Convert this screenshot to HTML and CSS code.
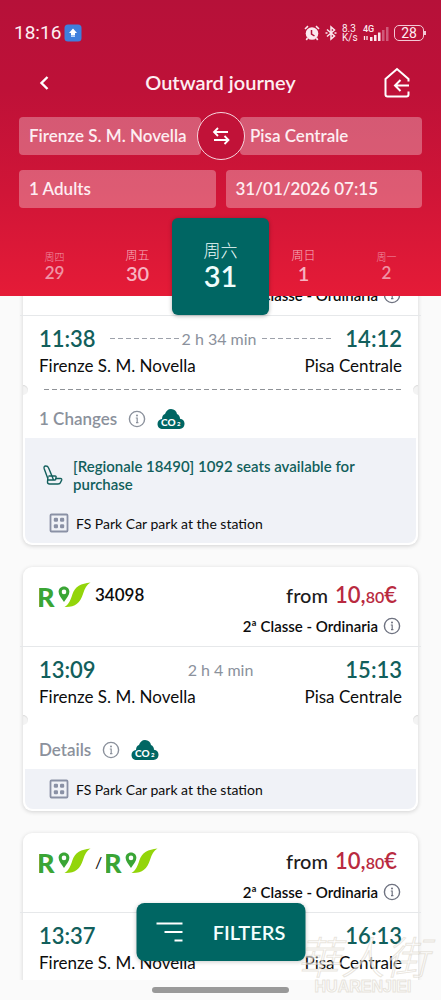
FILE: index.html
```html
<!DOCTYPE html>
<html lang="en">
<head>
<meta charset="utf-8">
<meta name="viewport" content="width=device-width, initial-scale=1">
<title>Outward journey</title>
<link rel="stylesheet" href="styles.css">
</head>
<body>
<svg class="defs" aria-hidden="true">
  <symbol id="info" viewBox="0 0 18 18">
    <circle cx="9" cy="9" r="7.6" fill="none" stroke="currentColor" stroke-width="1.4"/>
    <circle cx="9" cy="5.6" r="1" fill="currentColor"/>
    <path d="M7.800 8H9.200V12.900M8 12.600H10.400" fill="none" stroke="currentColor" stroke-width="1.200"/>
  </symbol>
  <symbol id="co2" viewBox="0 0 28 22">
    <path d="M6 21C2.600 21 .5 19 .5 16C.5 13 2.500 11.200 5 11C5 8 6.500 6.500 8 6C9 3 11 1 14 1C17.500 1 19.500 3.200 20 6C22 7 23 8.600 23 10.800C25.800 11 27.500 13 27.500 15.600C27.500 19 25.500 21 22.500 21Z" fill="#006663"/>
    <text x="4" y="18" class="co2-text">CO</text><text x="20" y="18" class="co2-sub">2</text>
  </symbol>
  <symbol id="park" viewBox="0 0 20 20">
    <rect x="1.500" y="1.500" width="17" height="17" rx="1" fill="none" stroke="currentColor" stroke-width="1.800"/>
    <g fill="currentColor"><rect x="4.800" y="4.800" width="4.200" height="4" rx="1.200"/><rect x="11" y="4.800" width="4.200" height="4" rx="1.200"/><rect x="4.800" y="11.200" width="4.200" height="4" rx="1.200"/><rect x="11" y="11.200" width="4.200" height="4" rx="1.200"/></g>
  </symbol>
  <symbol id="rv" viewBox="0 0 52 26">
    <text x="-2" y="25" class="rv-text">R</text>
    <path fill="#3aa535" fill-rule="evenodd" d="M25 4.500C28.200 4.500 30.400 6.800 30.400 9.800C30.400 13 27.500 16.500 25 20C22.500 16.500 19.600 13 19.600 9.800C19.600 6.800 21.800 4.500 25 4.500ZM25 7.600A2.300 2.300 0 1 0 25 12.200A2.300 2.300 0 1 0 25 7.600Z"/>
    <path fill="#93d50a" d="M25.500 25C30 22.500 31.500 18 33.500 12C36 4.500 42 1.500 51.500 .5C47.500 3 46 6 44 12C41 21 36 25.500 25.500 25Z"/>
  </symbol>
</svg>

<header class="top">
  <div class="status">
    <span class="clock">18:16</span>
    <svg class="badge" viewBox="0 0 18 18" aria-hidden="true"><rect x=".5" y=".5" width="17" height="17" rx="3.500" fill="#3f7fdc"/><path d="M9 4.500L13 9H11V11.500H7V9H5Z" fill="#fff"/><rect x="7" y="12" width="4" height="1" fill="#b9d6ff"/></svg>
    <div class="indicators">
      <svg class="alarm" viewBox="0 0 16 16" aria-hidden="true"><circle cx="8" cy="8.500" r="6.300" fill="#fbe9ef"/><path d="M1 4L4 1.200M15 4L12 1.200M3.500 13L2.300 15M12.500 13L13.700 15" stroke="#fbe9ef" stroke-width="1.600"/><path d="M7.500 5V9L10.500 11" fill="none" stroke="#b01139" stroke-width="1.500"/></svg>
      <svg class="bt" viewBox="0 0 12 16" aria-hidden="true"><path d="M2 4.500L9.500 11L6 14V2L9.500 5L2 11.500M.5 8H2.500M9.500 8H11.500" fill="none" stroke="#fbe9ef" stroke-width="1.500"/></svg>
      <span class="rate">8.3<br>K/s</span>
      <svg class="signal" viewBox="0 0 28 18" aria-hidden="true"><text x="1" y="8" class="sig-text">4G</text><path d="M2.500 12V16M5 12V16" stroke="#fbe9ef" stroke-width="1.300"/><g fill="#fbe9ef"><rect x="8" y="13" width="2.500" height="4"/><rect x="12" y="11" width="2.500" height="6"/><rect x="16" y="8.500" width="2.500" height="8.500"/></g><g fill="#cf5a7a"><rect x="20" y="6" width="2.500" height="11"/><rect x="24" y="3" width="2.500" height="14"/></g></svg>
      <span class="battery">28</span>
    </div>
  </div>

  <div class="titlebar">
    <button class="icon-btn" aria-label="Back"><svg class="back" viewBox="0 0 10 16"><path d="M8.500 2L2.500 8L8.500 14" fill="none" stroke="#fff" stroke-width="2.400"/></svg></button>
    <h1>Outward journey</h1>
    <button class="icon-btn" aria-label="Home"><svg class="home" viewBox="0 0 28 32"><path d="M25.500 14.500V12L14 2L2.500 12V27.500Q2.500 29.500 4.500 29.500H23.500Q25.500 29.500 25.500 27.500V24.500M26 18.500H12.500M17.500 13L12 18.500L17.500 24" fill="none" stroke="#fff" stroke-width="2"/></svg></button>
  </div>

  <div class="search">
    <div class="route">
      <button class="field">Firenze S. M. Novella</button>
      <button class="field field-to">Pisa Centrale</button>
      <button class="swap" aria-label="Swap stations"><svg viewBox="0 0 18 20"><path d="M16 6H2M6 2L2 6L6 10M2 14H16.500M12.500 10L16.500 14L12.500 18" fill="none" stroke="#fff" stroke-width="1.800"/></svg></button>
    </div>
    <div class="options">
      <button class="field">1 Adults</button>
      <button class="field">31/01/2026 07:15</button>
    </div>
  </div>

  <nav class="dates" aria-label="Date">
    <button class="day far"><span>周四</span><b>29</b></button>
    <button class="day"><span>周五</span><b>30</b></button>
    <button class="day selected" aria-current="date"><span>周六</span><b>31</b></button>
    <button class="day"><span>周日</span><b>1</b></button>
    <button class="day far"><span>周一</span><b>2</b></button>
  </nav>
</header>

<main class="results">
  <article class="card">
    <div class="card-head">
      <div class="trains"><svg class="rv"><use href="#rv"/></svg></div>
      <div class="fare">
        <p class="price">from <strong>10,<small>80</small>€</strong></p>
        <p class="class">2ª Classe - Ordinaria <svg class="info"><use href="#info"/></svg></p>
      </div>
    </div>
    <div class="journey">
      <div class="times"><time>11:38</time><span class="duration dashed">2 h 34 min</span><time>14:12</time></div>
      <div class="stations"><span>Firenze S. M. Novella</span><span>Pisa Centrale</span></div>
    </div>
    <div class="tear line"></div>
    <div class="details"><a href="#">1 Changes</a><svg class="info"><use href="#info"/></svg><svg class="co2"><use href="#co2"/></svg></div>
    <div class="notes">
      <p class="seats"><svg class="seat" viewBox="0 0 20 20"><path d="M5 14L1.300 4Q.3 1 2.800 1Q4.800 1 5.500 2.800L9 11H12Q13.500 11 13 12.500L12.500 15M5 11.500L4.500 17Q4.500 19 6.500 19H15Q17 19 17.500 17.500L18.700 15Q19 13.500 17.500 13.500H13M4.500 15H12.500M5.500 11H9L10.500 15" fill="none" stroke="currentColor" stroke-width="1.400"/></svg><span>[Regionale 18490] 1092 seats available for purchase</span></p>
      <p class="park"><svg class="park-icon"><use href="#park"/></svg>FS Park Car park at the station</p>
    </div>
  </article>

  <article class="card">
    <div class="card-head">
      <div class="trains"><svg class="rv"><use href="#rv"/></svg><span class="number">34098</span></div>
      <div class="fare">
        <p class="price">from <strong>10,<small>80</small>€</strong></p>
        <p class="class">2ª Classe - Ordinaria <svg class="info"><use href="#info"/></svg></p>
      </div>
    </div>
    <div class="journey">
      <div class="times"><time>13:09</time><span class="duration">2 h 4 min</span><time>15:13</time></div>
      <div class="stations"><span>Firenze S. M. Novella</span><span>Pisa Centrale</span></div>
    </div>
    <div class="tear"></div>
    <div class="details"><a href="#">Details</a><svg class="info"><use href="#info"/></svg><svg class="co2"><use href="#co2"/></svg></div>
    <div class="notes">
      <p class="park"><svg class="park-icon"><use href="#park"/></svg>FS Park Car park at the station</p>
    </div>
  </article>

  <article class="card">
    <div class="card-head">
      <div class="trains joined"><svg class="rv"><use href="#rv"/></svg><span>/</span><svg class="rv"><use href="#rv"/></svg></div>
      <div class="fare">
        <p class="price">from <strong>10,<small>80</small>€</strong></p>
        <p class="class">2ª Classe - Ordinaria <svg class="info"><use href="#info"/></svg></p>
      </div>
    </div>
    <div class="journey">
      <div class="times"><time>13:37</time><time>16:13</time></div>
      <div class="stations"><span>Firenze S. M. Novella</span><span>Pisa Centrale</span></div>
    </div>
  </article>
</main>

<button class="filters"><svg viewBox="0 0 28 20" aria-hidden="true"><path d="M1 1.500H27M9 10H27M19 18.500H27" stroke="#fff" stroke-width="2"/></svg>FILTERS</button>

<div class="watermark"><span class="mark-cjk">華人街</span><span class="mark-latin">HUARENJIEI</span></div>

<footer class="gesture"><span></span></footer>
</body>
</html>
```

FILE: styles.css
```css
* { box-sizing: border-box; }

body {
  margin: 0;
  height: 100vh;
  display: flex;
  flex-direction: column;
  overflow: hidden;
  background: #fafafa;
  color: #0c0c0c;
  font-family: Lato, "Noto Sans CJK SC", sans-serif;
  font-size: 16px;
}

p, h1 { margin: 0; }
button { border: 0; padding: 0; background: none; color: inherit; font: inherit; cursor: pointer; }
.defs { display: none; }

/* Header */
.top {
  position: relative;
  z-index: 2;
  flex: none;
  background: linear-gradient(#b61139, #be1138 30%, #d01537 65%, #e51b37);
  color: #fdeef2;
}

.status { height: 64px; padding: 1px 17px 0 14px; display: flex; align-items: center; }
.clock { font-family: Roboto, sans-serif; font-size: 19px; font-weight: 400; line-height: 20px; }
.badge { width: 18px; height: 18px; margin-left: 3px; }
.indicators { margin-left: auto; display: flex; align-items: center; }
.alarm { width: 16px; height: 16px; margin-right: 5px; }
.bt { width: 12px; height: 16px; margin-right: 5px; }
.rate { width: 20px; font-family: Roboto, sans-serif; font-size: 10px; line-height: 9px; }
.signal { width: 28px; height: 18px; margin-right: 4px; }
.sig-text { font: 500 9px Roboto, sans-serif; fill: #fbe9ef; }
.battery {
  position: relative;
  width: 30px;
  height: 16px;
  border: 1px solid #f3c9d5;
  border-radius: 5px;
  font-family: Roboto, sans-serif;
  font-size: 14px;
  line-height: 14px;
  text-align: center;
}
.battery::after { content: ""; position: absolute; right: -3px; top: 5px; width: 2px; height: 4px; background: #f3c9d5; }

.titlebar { height: 37px; padding: 0 30px; display: flex; align-items: center; justify-content: space-between; }
.titlebar h1 { padding-bottom: 2px; font-size: 20px; font-weight: 600; line-height: 24px; }
.icon-btn { width: 28px; height: 32px; display: flex; align-items: center; justify-content: center; }
.back { width: 10px; height: 16px; }
.home { width: 28px; height: 32px; }

.search { padding: 16px 19px 10px; }
.route, .options { display: grid; grid-template-columns: 1fr 1fr; }
.route { position: relative; gap: 39px; }
.options { gap: 10px; margin-top: 15px; }
.field {
  height: 38px;
  padding: 0 10px 2px;
  border-radius: 4px;
  background: rgba(255, 255, 255, 0.3);
  font-size: 17px;
  font-weight: 600;
  text-align: left;
  white-space: nowrap;
}
.swap {
  position: absolute;
  inset: 0;
  margin: -5px auto;
  width: 48px;
  height: 48px;
  display: flex;
  align-items: center;
  justify-content: center;
  border: 1px solid #f6d5dd;
  border-radius: 50%;
  background: #c11238;
}
.swap svg { width: 18px; height: 20px; }

.dates { height: 78px; padding: 0 13px; display: grid; grid-template-columns: repeat(5, 1fr); align-items: start; }
.day { padding-top: 29px; display: flex; flex-direction: column; align-items: center; font-size: 12px; line-height: 16px; color: #f7b3c1; }
.day span { font-family: "Noto Sans CJK SC", sans-serif; font-weight: 300; }
.day b { font-size: 20px; font-weight: 600; line-height: 20px; }
.day.far { padding-top: 31px; font-size: 10px; color: #f093a5; }
.day.far b { font-size: 17px; line-height: 16px; }
.day.selected {
  height: 97px;
  margin: 0 -7px;
  padding-top: 22px;
  border-radius: 6px;
  background: #006663;
  box-shadow: 0 1px 4px rgba(0, 0, 0, 0.3);
  color: #effdfc;
  font-size: 17px;
  line-height: 20px;
}
.day.selected b { font-size: 29px; line-height: 32px; }

/* Results, scrolled partly under the header */
.results { flex: 1; min-height: 0; margin-top: -60px; padding: 0 23px; overflow: hidden; }

.card { margin-bottom: 22px; padding: 0 2px 2px; border-radius: 9px; background: #fff; box-shadow: 0 1px 4px rgba(0, 0, 0, 0.16); }
.card-head {
  height: 80px;
  margin: 0 -5px;
  padding: 13px 20px 0 19px;
  display: flex;
  justify-content: space-between;
  border-bottom: 1px solid #e6e8ea;
}
.trains { height: 30px; display: flex; align-items: center; gap: 4px; }
.rv { width: 52px; height: 26px; }
.rv-text { font: 900 27px Lato, sans-serif; fill: #3aa535; }
.number { padding-bottom: 2px; font-weight: 600; font-size: 17px; }
.fare { text-align: right; }
.price { height: 31px; padding-right: 4px; font-size: 20px; line-height: 30px; font-weight: 500; color: #1c1c1c; }
.price strong { margin-left: 2px; font-size: 22px; font-weight: 600; color: #b92a40; }
.price small { font-size: 16px; }
.class { height: 30px; display: flex; align-items: center; justify-content: flex-end; gap: 5px; font-size: 15px; font-weight: 600; }
.info { width: 18px; height: 18px; color: #6e7280; }

.journey { height: 73px; padding: 7px 14px 0; }
.times, .stations { display: flex; align-items: center; justify-content: space-between; }
.times { height: 30px; gap: 14px; }
.times time { font-size: 22px; font-weight: 600; color: #125f5c; }
.stations { height: 25px; font-size: 17px; }
.duration { flex: 1; display: flex; align-items: center; justify-content: center; gap: 5px; color: #8b919c; white-space: nowrap; font-size: 16px; }
.dashed::before, .dashed::after {
  content: "";
  flex: 1;
  height: 1px;
  background: repeating-linear-gradient(90deg, #9da1aa 0 5px, transparent 5px 8px);
}
.dashed::before { margin-right: -3px; }

.tear { height: 0; margin: 0 -2px; display: flex; justify-content: space-between; align-items: center; }
.tear::before, .tear::after { content: ""; flex: none; width: 5px; height: 10px; background: #f3f3f3; box-shadow: inset 0 1px 1px rgba(0, 0, 0, 0.1); }
.tear::before { border-radius: 0 5px 5px 0; }
.tear::after { border-radius: 5px 0 0 5px; }
.tear.line { background: repeating-linear-gradient(90deg, #8f9297 0 5px, transparent 5px 8px) 21px 0 / calc(100% - 38px) 1px no-repeat; height: 1px; margin-bottom: -1px; }

.details { height: 49px; padding: 10px 14px 0; display: flex; align-items: center; gap: 11px; }
.details a { color: #8b919c; font-size: 17px; font-weight: 600; text-decoration: none; }
.details .info { color: #8b919c; }
.co2 { width: 28px; height: 22px; }
.co2-text { font: 900 10px Lato, sans-serif; fill: #fff; }
.co2-sub { font: 900 6px Lato, sans-serif; fill: #fff; }

.notes { border-radius: 0 0 8px 8px; background: #f0f2f7; }
.seats { padding: 19px 60px 0 18px; display: flex; align-items: center; gap: 10px; font-size: 15px; font-weight: 600; line-height: 18px; color: #125f5c; }
.seat { flex: none; width: 20px; height: 20px; }
.seats + .park { margin-top: 10px; }
.park { height: 40px; padding-left: 24px; display: flex; align-items: center; gap: 7px; font-size: 14px; }
.park-icon { width: 20px; height: 20px; color: #8a91a5; }

/* Floating filter button */
.filters {
  position: absolute;
  z-index: 3;
  left: 50%;
  bottom: 39px;
  width: 169px;
  height: 58px;
  transform: translateX(-50%);
  display: flex;
  align-items: center;
  justify-content: center;
  gap: 29px;
  border-radius: 8px;
  background: #006663;
  box-shadow: 0 1px 4px rgba(0, 0, 0, 0.2);
  color: #f4fffe;
  font-size: 20px;
  font-weight: 600;
}
.filters svg { width: 28px; height: 20px; }

.watermark {
  position: absolute;
  z-index: 4;
  right: 12px;
  bottom: 5px;
  display: flex;
  flex-direction: column;
  align-items: center;
  color: rgba(255, 255, 255, 0.6);
  -webkit-text-stroke: 1px rgba(200, 190, 170, 0.4);
  pointer-events: none;
}
.mark-cjk { font-family: "Noto Sans CJK TC", sans-serif; font-size: 44px; font-style: italic; font-weight: 300; line-height: 48px; }
.mark-latin { font-family: "Liberation Sans", Arial, sans-serif; font-size: 16px; font-weight: 700; line-height: 16px; }

.gesture { flex: none; height: 20px; display: flex; align-items: center; justify-content: center; background: #fafafa; }
.gesture span { width: 137px; height: 6px; border-radius: 3px; background: #999; }
```
